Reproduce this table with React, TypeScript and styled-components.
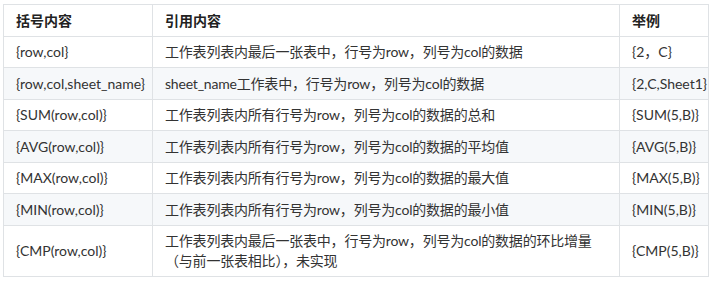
import styled, { createGlobalStyle } from "styled-components";

const GlobalStyle = createGlobalStyle`
  html, body {
    margin: 0;
    padding: 0;
    background: #fff;
  }
  body {
    font-family: Lato, "Noto Sans CJK SC", sans-serif;
    color: #333;
  }
  *, *::before, *::after {
    box-sizing: border-box;
  }
`;

const Wrapper = styled.div`
  padding: 4px 0 0 3px;
`;

const Table = styled.table`
  width: 705px;
  border-collapse: collapse;
  table-layout: fixed;
  font-size: 14px;
  line-height: 19.5px;
`;

const HeadCell = styled.th<{ $w: number }>`
  width: ${(p) => p.$w}px;
  text-align: left;
  font-weight: bold;
  color: #222;
  padding: 5.5px 12px;
  border: 1px solid #dfe2e5;
`;

const Row = styled.tr<{ $striped: boolean }>`
  background: ${(p) => (p.$striped ? "#f6f8fa" : "#fff")};
`;

const Cell = styled.td<{ $tight?: boolean }>`
  padding: 5.5px 12px;
  border: 1px solid #dfe2e5;
  vertical-align: middle;
  letter-spacing: ${(p) => (p.$tight ? "-0.2px" : "normal")};
`;

const rows = [
  ["{row,col}", "工作表列表内最后一张表中，行号为row，列号为col的数据", "{2，C}"],
  ["{row,col,sheet_name}", "sheet_name工作表中，行号为row，列号为col的数据", "{2,C,Sheet1}"],
  ["{SUM(row,col)}", "工作表列表内所有行号为row，列号为col的数据的总和", "{SUM(5,B)}"],
  ["{AVG(row,col)}", "工作表列表内所有行号为row，列号为col的数据的平均值", "{AVG(5,B)}"],
  ["{MAX(row,col)}", "工作表列表内所有行号为row，列号为col的数据的最大值", "{MAX(5,B)}"],
  ["{MIN(row,col)}", "工作表列表内所有行号为row，列号为col的数据的最小值", "{MIN(5,B)}"],
  [
    "{CMP(row,col)}",
    "工作表列表内最后一张表中，行号为row，列号为col的数据的环比增量（与前一张表相比），未实现",
    "{CMP(5,B)}",
  ],
];

export default function App() {
  return (
    <Wrapper>
      <GlobalStyle />
      <Table>
        <thead>
          <tr>
            <HeadCell $w={149}>括号内容</HeadCell>
            <HeadCell $w={467}>引用内容</HeadCell>
            <HeadCell $w={89}>举例</HeadCell>
          </tr>
        </thead>
        <tbody>
          {rows.map((r, i) => (
            <Row key={r[0]} $striped={i % 2 === 1}>
              <Cell>{r[0]}</Cell>
              <Cell $tight>{r[1]}</Cell>
              <Cell>{r[2]}</Cell>
            </Row>
          ))}
        </tbody>
      </Table>
    </Wrapper>
  );
}
